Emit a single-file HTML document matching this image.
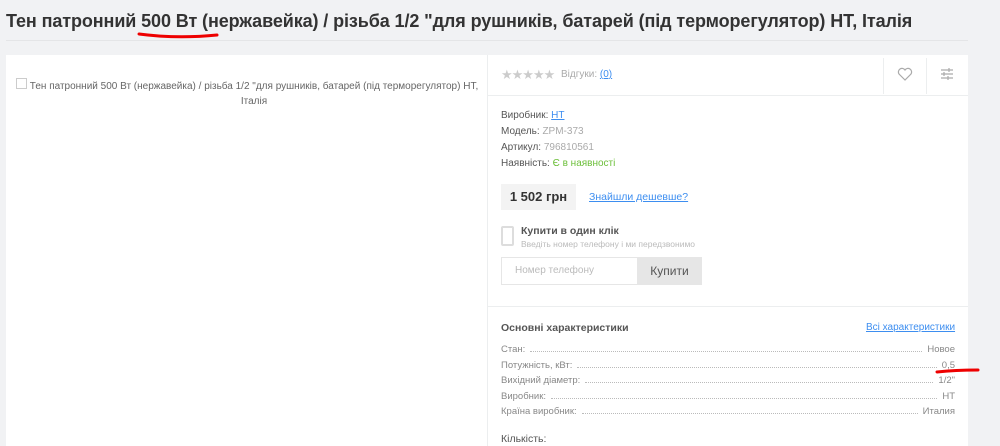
<!DOCTYPE html><html><head><meta charset="utf-8"><style>
*{margin:0;padding:0;box-sizing:border-box}
body{width:1000px;height:446px;overflow:hidden;background:#f1f2f4;font-family:"Liberation Sans",sans-serif;color:#333;position:relative}
.a{position:absolute}
h1{position:absolute;left:6px;top:11px;font-size:18px;font-weight:bold;color:#333;white-space:nowrap;letter-spacing:-0.1px}
.s{font-size:10px;color:#555}
.g{color:#aaa}
a{color:#3d8ef0;text-decoration:underline}
.row{position:absolute;left:501px;width:454px;font-size:9.5px;color:#888;display:flex;align-items:flex-end}
.row .d{flex:1;border-bottom:1px dotted #bbb;margin:0 5px 3px}
</style></head><body>
<h1>Тен патронний 500 Вт (нержавейка) / різьба 1/2 "для рушників, батарей (під терморегулятор) НТ, Італія</h1>
<div class="a" style="left:6px;top:40px;width:962px;height:1px;background:#e4e5e7"></div>
<svg class="a" style="left:137px;top:30px" width="82" height="10"><path d="M2 4 Q40 9 80 5" stroke="#e00" stroke-width="3" fill="none" stroke-linecap="round"/></svg>
<div class="a" style="left:6px;top:55px;width:962px;height:391px;background:#fff"></div>
<div class="a" style="left:487px;top:55px;width:1px;height:391px;background:#eceeef"></div>
<div class="a" style="left:16px;top:78px;width:11px;height:11px;border:1px solid #ccc"></div>
<div class="a" style="left:20px;top:79px;width:468px;text-align:center;font-size:10px;color:#666;line-height:15px">Тен патронний 500 Вт (нержавейка) / різьба 1/2 "для рушників, батарей (під терморегулятор) НТ,<br>Італія</div>
<div class="a" style="left:501px;top:67px;font-size:13px;color:#ccc;letter-spacing:-1px">★★★★★</div>
<div class="a s g" style="left:561px;top:69px">Відгуки: <a>(0)</a></div>
<div class="a" style="left:883px;top:58px;width:1px;height:36px;background:#eceeef"></div>
<div class="a" style="left:926px;top:58px;width:1px;height:36px;background:#eceeef"></div>
<svg class="a" style="left:897px;top:67px" width="16" height="14"><path d="M8 13 L2 7 A3.2 3.2 0 0 1 8 3 A3.2 3.2 0 0 1 14 7 Z" fill="none" stroke="#aaa" stroke-width="1.2"/></svg>
<svg class="a" style="left:940px;top:68px" width="14" height="12"><g stroke="#aaa" stroke-width="1.2"><path d="M1 2H13M1 6H13M1 10H13"/><path d="M9 0V4M4 4V8M8 8V12"/></g></svg>
<div class="a" style="left:488px;top:95px;width:480px;height:1px;background:#eceeef"></div>
<div class="a s" style="left:501px;top:110px">Виробник: <a>НТ</a></div>
<div class="a s" style="left:501px;top:126px">Модель: <span class="g">ZPM-373</span></div>
<div class="a s" style="left:501px;top:142px">Артикул: <span class="g">796810561</span></div>
<div class="a s" style="left:501px;top:158px">Наявність: <span style="color:#6cbf3a">Є в наявності</span></div>
<div class="a" style="left:501px;top:184px;width:75px;height:26px;background:#f3f3f3;font-size:13px;font-weight:bold;line-height:26px;text-align:center;color:#333">1 502 грн</div>
<div class="a" style="left:589px;top:191px;font-size:10.5px"><a>Знайшли дешевше?</a></div>
<div class="a" style="left:501px;top:226px;width:13px;height:20px;border:2px solid #ddd;border-radius:2px"></div>
<div class="a" style="left:521px;top:225px;font-size:10.5px;font-weight:bold;color:#555">Купити в один клік</div>
<div class="a" style="left:521px;top:239px;font-size:8.5px;color:#bbb">Введіть номер телефону і ми передзвонимо</div>
<div class="a" style="left:501px;top:257px;width:201px;height:28px;border:1px solid #e6e6e6"></div>
<div class="a" style="left:515px;top:265px;font-size:10px;color:#bbb">Номер телефону</div>
<div class="a" style="left:637px;top:257px;width:65px;height:28px;background:#e6e6e6;text-align:center;line-height:28px;font-size:12px;color:#555">Купити</div>
<div class="a" style="left:488px;top:306px;width:480px;height:1px;background:#eceeef"></div>
<div class="a" style="left:501px;top:322px;font-size:10.5px;font-weight:bold;color:#555">Основні характеристики</div>
<div class="a" style="left:866px;top:322px;font-size:10px"><a>Всі характеристики</a></div>
<div class="row" style="top:344px"><span>Стан:</span><span class="d"></span><span>Новое</span></div>
<div class="row" style="top:360px"><span>Потужність, кВт:</span><span class="d"></span><span>0,5</span></div>
<div class="row" style="top:375px"><span>Вихідний діаметр:</span><span class="d"></span><span>1/2"</span></div>
<div class="row" style="top:391px"><span>Виробник:</span><span class="d"></span><span>НТ</span></div>
<div class="row" style="top:406px"><span>Країна виробник:</span><span class="d"></span><span>Италия</span></div>
<svg class="a" style="left:935px;top:366px" width="45" height="10"><path d="M2 6 Q20 4 43 4" stroke="#e00" stroke-width="3" fill="none" stroke-linecap="round"/></svg>
<div class="a" style="left:501px;top:433px;font-size:10.5px;color:#555">Кількість:</div>
</body></html>
